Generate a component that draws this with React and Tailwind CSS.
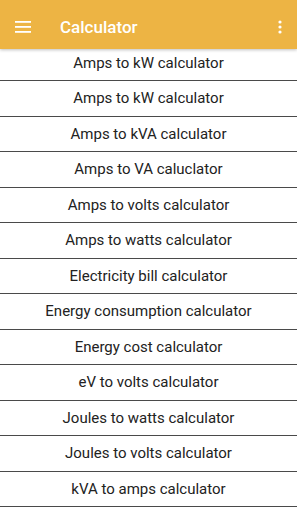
import React from 'react';

const items = [
  'Amps to kW calculator',
  'Amps to kW calculator',
  'Amps to kVA calculator',
  'Amps to VA caluclator',
  'Amps to volts calculator',
  'Amps to watts calculator',
  'Electricity bill calculator',
  'Energy consumption calculator',
  'Energy cost calculator',
  'eV to volts calculator',
  'Joules to watts calculator',
  'Joules to volts calculator',
  'kVA to amps calculator',
];

export default function App() {
  return (
    <div className="w-[297px] h-[512px] overflow-hidden bg-white" style={{ fontFamily: 'Roboto, "Liberation Sans", sans-serif' }}>
      <header className="relative z-10 flex h-[49px] items-center bg-[#edb444] pt-[4px] text-white shadow-[0_1px_3px_rgba(0,0,0,0.25)]">
        <button className="flex h-[45px] w-[46px] items-center justify-center">
          <svg width="16" height="12" viewBox="0 0 16 12" fill="white">
            <rect x="0" y="0" width="16" height="1.8" />
            <rect x="0" y="5" width="16" height="1.8" />
            <rect x="0" y="10" width="16" height="1.8" />
          </svg>
        </button>
        <h1 className="ml-[14px] mt-[2px] flex-1 text-[17px] font-medium">Calculator</h1>
        <button className="mr-[5px] flex h-[45px] w-[24px] items-center justify-center">
          <svg width="4" height="14" viewBox="0 0 4 14" fill="white">
            <circle cx="2" cy="2" r="1.6" />
            <circle cx="2" cy="7" r="1.6" />
            <circle cx="2" cy="12" r="1.6" />
          </svg>
        </button>
      </header>
      <ul className="-mt-[3.5px]">
        {items.map((t, i) => (
          <li key={i} className="flex h-[35.5px] items-center justify-center border-b border-[#4a4a4a] text-[15px] text-[#222]">
            {t}
          </li>
        ))}
      </ul>
    </div>
  );
}
